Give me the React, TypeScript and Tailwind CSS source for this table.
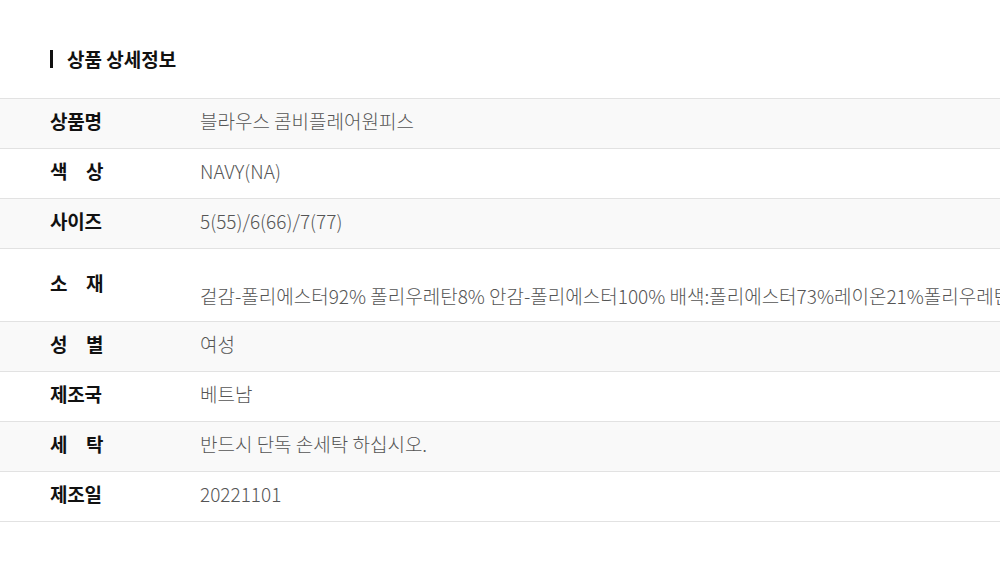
const rows: { label: string; value: string; tall?: boolean }[] = [
  { label: "상품명", value: "블라우스 콤비플레어원피스" },
  { label: "색　상", value: "NAVY(NA)" },
  { label: "사이즈", value: "5(55)/6(66)/7(77)" },
  {
    label: "소　재",
    value:
      "겉감-폴리에스터92% 폴리우레탄8% 안감-폴리에스터100% 배색:폴리에스터73%레이온21%폴리우레탄6%",
    tall: true,
  },
  { label: "성　별", value: "여성" },
  { label: "제조국", value: "베트남" },
  { label: "세　탁", value: "반드시 단독 손세탁 하십시오." },
  { label: "제조일", value: "20221101" },
];

export default function App() {
  return (
    <div
      className="w-[1000px] h-[571px] overflow-hidden bg-white pt-[46px]"
      style={{ fontFamily: '"Noto Sans CJK KR", "Noto Sans", sans-serif' }}
    >
      <h2 className="ml-[50px] flex items-center gap-[14px] text-[19px] font-bold leading-[26px] text-[#111]">
        <span className="block h-[18px] w-[3px] bg-[#111]" />
        상품 상세정보
      </h2>

      <div className="mt-[26px] border-t border-[#e2e2e2]">
        {rows.map((r, i) => (
          <div
            key={r.label}
            className={`flex border-b border-[#e2e2e2] ${i % 2 === 0 ? "bg-[#f9f9f9]" : "bg-white"} ${r.tall ? "h-[73px]" : "h-[50px] pb-[4px]"}`}
          >
            <div
              className={`w-[200px] shrink-0 pl-[50px] flex items-center text-[19px] font-bold text-[#111] tracking-[-0.2px] ${r.tall ? "pb-[4px]" : ""}`}
            >
              {r.label}
            </div>
            <div
              className={`flex whitespace-nowrap text-[19px] font-light text-[#555] ${r.tall ? "items-end pb-[11px]" : "items-center"}`}
            >
              {r.value}
            </div>
          </div>
        ))}
      </div>
    </div>
  );
}
